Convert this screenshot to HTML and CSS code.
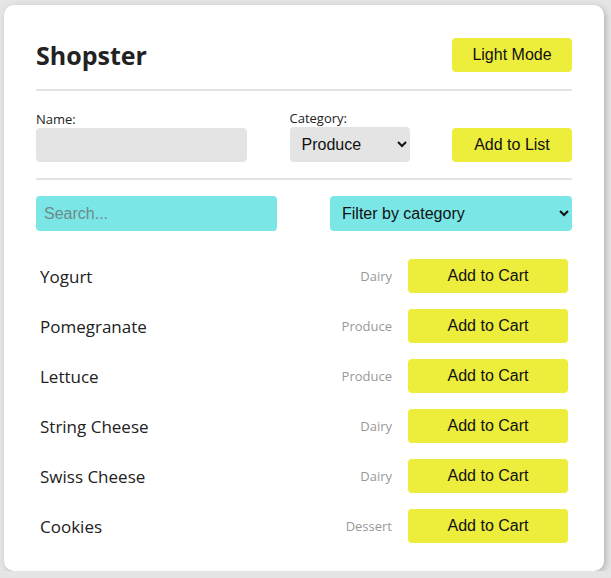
FILE: index.html
```html
<!DOCTYPE html>
<html lang="en">
<head>
<meta charset="utf-8">
<title>Shopster</title>
<link rel="stylesheet" href="styles.css">
</head>
<body>
<main class="card">
  <header class="header">
    <h1 class="title">Shopster</h1>
    <button class="btn btn-mode">Light Mode</button>
  </header>
  <hr class="divider divider-top">
  <form class="add-form">
    <div class="field field-name">
      <label class="label" for="name">Name:</label>
      <input class="input-name" id="name" type="text">
    </div>
    <div class="field field-cat">
      <label class="label" for="cat">Category:</label>
      <select class="select-cat" id="cat">
        <option>Produce</option>
        <option>Dairy</option>
        <option>Dessert</option>
      </select>
    </div>
    <button class="btn btn-add" type="button">Add to List</button>
  </form>
  <hr class="divider divider-mid">
  <div class="filters">
    <input class="search" type="text" placeholder="Search...">
    <select class="filter">
      <option>Filter by category</option>
    </select>
  </div>
  <ul class="list">
    <li class="item"><span class="item-name">Yogurt</span><span class="item-cat">Dairy</span><button class="btn btn-cart">Add to Cart</button></li>
    <li class="item"><span class="item-name">Pomegranate</span><span class="item-cat">Produce</span><button class="btn btn-cart">Add to Cart</button></li>
    <li class="item"><span class="item-name">Lettuce</span><span class="item-cat">Produce</span><button class="btn btn-cart">Add to Cart</button></li>
    <li class="item"><span class="item-name">String Cheese</span><span class="item-cat">Dairy</span><button class="btn btn-cart">Add to Cart</button></li>
    <li class="item"><span class="item-name">Swiss Cheese</span><span class="item-cat">Dairy</span><button class="btn btn-cart">Add to Cart</button></li>
    <li class="item"><span class="item-name">Cookies</span><span class="item-cat">Dessert</span><button class="btn btn-cart">Add to Cart</button></li>
  </ul>
</main>
</body>
</html>
```

FILE: styles.css
```css
* { box-sizing: border-box; }

html, body {
  margin: 0;
  padding: 0;
}

body {
  background: #e5e5e5;
  font-family: "Open Sans", "Noto Sans", sans-serif;
  color: #222;
  padding: 5px 0 0 4px;
}

.card {
  width: 600px;
  background: #fff;
  border-radius: 10px;
  box-shadow: 2px 2px 6px rgba(0, 0, 0, 0.22);
  padding: 33px 32px 20px 32px;
}

.header {
  display: flex;
  justify-content: space-between;
  align-items: center;
  height: 34px;
}

.title {
  margin: 0;
  font-size: 25px;
  font-weight: 700;
  color: #222;
  line-height: 34px;
}

.btn {
  font-family: "Liberation Sans", Arial, sans-serif;
  font-size: 16px;
  color: #111;
  background: #eded3c;
  border: none;
  border-radius: 4px;
  cursor: pointer;
  padding: 0;
}

.btn-mode, .btn-add {
  width: 120px;
  height: 34px;
}

.divider {
  border: none;
  height: 2px;
  background: #e4e4e4;
  margin: 0;
}

.divider-top { margin-top: 17px; }

.add-form {
  display: flex;
  justify-content: space-between;
  align-items: flex-end;
  margin-top: 18px;
}

.field {
  display: flex;
  flex-direction: column;
}

.label {
  font-size: 13px;
  line-height: 18px;
  color: #222;
}

.input-name {
  width: 211px;
  height: 34px;
  background: #e4e4e4;
  border: none;
  border-radius: 4px;
  font-family: "Liberation Sans", Arial, sans-serif;
  font-size: 16px;
  padding: 0 8px;
}

.select-cat {
  width: 120px;
  height: 35px;
  background: #e4e4e4;
  border: none;
  border-radius: 4px;
  font-family: "Liberation Sans", Arial, sans-serif;
  font-size: 16px;
  color: #111;
  padding: 0 4px 0 8px;
}

.divider-mid { margin-top: 16px; }

.filters {
  display: flex;
  justify-content: space-between;
  margin-top: 16px;
}

.search, .filter {
  height: 35px;
  background: #7ae6e6;
  border: none;
  border-radius: 4px;
  font-family: "Liberation Sans", Arial, sans-serif;
  font-size: 16px;
  color: #111;
}

.search { width: 241px; padding: 0 8px; }
.search::placeholder { color: #6f8a8a; }

.filter { width: 242px; padding: 0 4px 0 8px; }

.list {
  list-style: none;
  margin: 20px 0 0 0;
  padding: 0;
}

.item {
  display: flex;
  align-items: center;
  padding: 8px 4px;
  height: 50px;
}

.item-name {
  flex: 1;
  font-size: 17px;
  color: #222;
}

.item-cat {
  font-size: 13px;
  color: #999;
  margin-right: 16px;
}

.btn-cart {
  width: 160px;
  height: 34px;
}
```
